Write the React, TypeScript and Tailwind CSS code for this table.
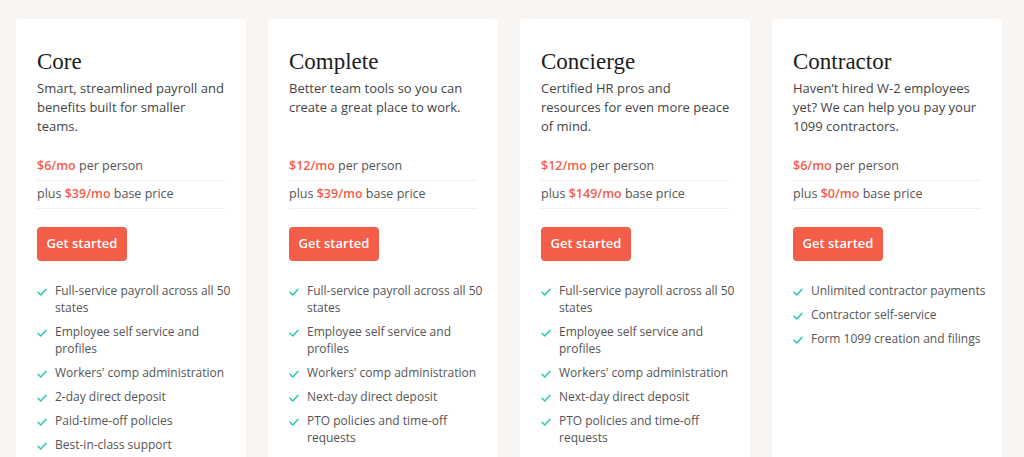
import React from 'react';

interface Plan {
  name: string;
  blurb: string;
  perPerson: string;
  base: string;
  features: string[];
}

const plans: Plan[] = [
  {
    name: 'Core',
    blurb: 'Smart, streamlined payroll and benefits built for smaller teams.',
    perPerson: '$6/mo',
    base: '$39/mo',
    features: [
      'Full-service payroll across all 50 states',
      'Employee self service and profiles',
      "Workers' comp administration",
      '2-day direct deposit',
      'Paid-time-off policies',
      'Best-in-class support',
    ],
  },
  {
    name: 'Complete',
    blurb: 'Better team tools so you can create a great place to work.',
    perPerson: '$12/mo',
    base: '$39/mo',
    features: [
      'Full-service payroll across all 50 states',
      'Employee self service and profiles',
      "Workers' comp administration",
      'Next-day direct deposit',
      'PTO policies and time-off requests',
    ],
  },
  {
    name: 'Concierge',
    blurb: 'Certified HR pros and resources for even more peace of mind.',
    perPerson: '$12/mo',
    base: '$149/mo',
    features: [
      'Full-service payroll across all 50 states',
      'Employee self service and profiles',
      "Workers' comp administration",
      'Next-day direct deposit',
      'PTO policies and time-off requests',
    ],
  },
  {
    name: 'Contractor',
    blurb: "Haven\u2019t hired W-2 employees yet? We can help you pay your 1099 contractors.",
    perPerson: '$6/mo',
    base: '$0/mo',
    features: ['Unlimited contractor payments', 'Contractor self-service', 'Form 1099 creation and filings'],
  },
];

const Check = () => (
  <svg width="10" height="8" viewBox="0 0 10 8" fill="none" className="mt-[6px] shrink-0">
    <path d="M1 4.2 L3.8 7 L9 1.2" stroke="#1fc8b1" strokeWidth="1.4" strokeLinecap="round" strokeLinejoin="round" />
  </svg>
);

const PlanCard: React.FC<{ plan: Plan }> = ({ plan }) => (
  <div className="w-[230px] h-[460px] shrink-0 bg-white rounded-[3px] px-[21px] pt-[30px]">
    <h2 className="text-[23px] leading-[26px] text-[#1c1c1c] font-['Liberation_Serif',serif]">{plan.name}</h2>
    <p className="mt-[4px] w-[190px] min-h-[57px] text-[13px] leading-[19px] text-[#444]">{plan.blurb}</p>
    <div className="mt-[17px] text-[12.5px] text-[#555]">
      <div className="h-[28px] flex items-center border-b border-[#efefef]">
        <span className="text-[#f45d48] font-semibold">{plan.perPerson}</span>&nbsp;per person
      </div>
      <div className="h-[28px] flex items-center border-b border-[#efefef]">
        plus&nbsp;<span className="text-[#f45d48] font-semibold">{plan.base}</span>&nbsp;base price
      </div>
    </div>
    <button className="mt-[18px] h-[34px] w-[90px] rounded-[4px] bg-[#f45d48] text-white text-[13px] font-semibold">
      Get started
    </button>
    <ul className="mt-[21px] flex flex-col gap-[7px]">
      {plan.features.map((f) => (
        <li key={f} className="flex gap-[8px] text-[12px] leading-[17px] text-[#555]">
          <Check />
          <span className="w-[178px] shrink-0">{f}</span>
        </li>
      ))}
    </ul>
  </div>
);

export default function App() {
  return (
    <div className="w-[1024px] h-[457px] overflow-hidden bg-[#f8f5f2] font-['Open_Sans',sans-serif]">
      <div className="flex gap-[22px] pl-[16px] pt-[19px]">
        {plans.map((p) => (
          <PlanCard key={p.name} plan={p} />
        ))}
      </div>
    </div>
  );
}
